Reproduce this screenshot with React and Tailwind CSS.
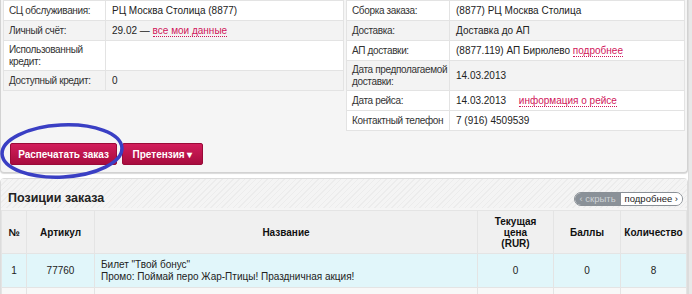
const font = { fontFamily: '"Liberation Sans", Arial, sans-serif' };

function Link({ children }) {
  return (
    <span className="text-[#d0155a] border-b border-dotted border-[#d0155a] leading-[12px]">{children}</span>
  );
}

function InfoTable({ rows, labelW }) {
  return (
    <table className="w-full border-collapse text-[10px] text-[#333] table-fixed">
      <tbody>
        {rows.map((r, i) => (
          <tr key={i} className={r.gray ? "bg-[#f3f3f3]" : "bg-white"} style={{ height: r.h }}>
            <td className={`border border-[#e3e3e3] px-[5px] whitespace-nowrap leading-[12px] tracking-[-0.35px] ${labelW}`}>{r.label}</td>
            <td className="border border-[#e3e3e3] px-[6px] whitespace-nowrap text-[#222] leading-[12px]">{r.value}</td>
          </tr>
        ))}
      </tbody>
    </table>
  );
}

const leftRows = [
  { label: "СЦ обслуживания:", value: "РЦ Москва Столица (8877)", h: 20 },
  { label: "Личный счёт:", value: <>29.02 — <Link>все мои данные</Link></>, h: 20, gray: true },
  { label: <>Использованный<br />кредит:</>, value: "", h: 30 },
  { label: "Доступный кредит:", value: "0", h: 20, gray: true },
];

const rightRows = [
  { label: "Сборка заказа:", value: "(8877) РЦ Москва Столица", h: 20 },
  { label: "Доставка:", value: "Доставка до АП", h: 20, gray: true },
  { label: "АП доставки:", value: <>(8877.119) АП Бирюлево <Link>подробнее</Link></>, h: 20 },
  { label: <>Дата предполагаемой<br />доставки:</>, value: "14.03.2013", h: 30, gray: true },
  { label: "Дата рейса:", value: <>14.03.2013 <span className="ml-[10px]"><Link>информация о рейсе</Link></span></>, h: 20 },
  { label: "Контактный телефон", value: "7 (916) 4509539", h: 20 },
];

export default function App() {
  return (
    <div className="w-[692px] h-[294px] overflow-hidden bg-white relative" style={font}>
      <div className="flex">
        <div className="w-[688px]">
          <div className="bg-[#f5f5f5] border border-[#d2d2d2] border-t-0 rounded-b-[4px] shadow-[0_1px_1px_rgba(0,0,0,0.15)] h-[173px]">
            <div className="flex gap-[2px] px-[2px] items-start">
              <div className="w-[342px]">
                <InfoTable rows={leftRows} labelW="w-[102px]" />
              </div>
              <div className="w-[340px]">
                <InfoTable rows={rightRows} labelW="w-[103px]" />
              </div>
            </div>
            <div className="flex gap-[5px] pl-[9px] pt-[12px]">
              <button className="h-[22px] w-[107px] text-[10px] font-bold text-white rounded-[2px] bg-gradient-to-b from-[#d21d5b] to-[#a80c3e] border border-[#9a0a38]">Распечатать заказ</button>
              <button className="h-[22px] w-[81px] text-[10px] font-bold text-white rounded-[2px] bg-gradient-to-b from-[#d21d5b] to-[#a80c3e] border border-[#9a0a38]">Претензия ▾</button>
            </div>
          </div>
          <div className="mt-[5px] border border-[#dcdcdc] rounded-t-[4px] bg-[#f5f5f5]">
            <div className="h-[29px] flex items-center justify-between pl-[7px] pr-[4px] bg-[repeating-linear-gradient(135deg,#ececec_0px,#ececec_1px,#f4f4f4_1px,#f4f4f4_4px)]">
              <span className="text-[12.5px] font-bold text-[#222] mt-[10px]">Позиции заказа</span>
              <div className="flex mt-[11px] h-[14px] rounded-full overflow-hidden border border-[#8a9096] text-[9.5px] leading-[12px]">
                <span className="bg-[#8a9198] text-[#cfd3d6] pl-[4px] pr-[5px]">‹ скрыть</span>
                <span className="bg-white text-[#222] pl-[4px] pr-[4px]">подробнее ›</span>
              </div>
            </div>
            <table className="w-full border-collapse text-[10px] text-[#222] mt-[2px]">
              <thead>
                <tr className="bg-[#f0f0f0] h-[43px] font-bold text-[#111]">
                  <th className="border border-[#e4e4e4] w-[25px]">№</th>
                  <th className="border border-[#e4e4e4] w-[68px]">Артикул</th>
                  <th className="border border-[#e4e4e4]">Название</th>
                  <th className="border border-[#e4e4e4] w-[76px] leading-[11px]">Текущая<br />цена<br />(RUR)</th>
                  <th className="border border-[#e4e4e4] w-[67px]">Баллы</th>
                  <th className="border border-[#e4e4e4] w-[66px]">Количество</th>
                </tr>
              </thead>
              <tbody>
                <tr className="bg-[#e1f6fa] h-[34px]">
                  <td className="border border-[#e4e4e4] text-center">1</td>
                  <td className="border border-[#e4e4e4] text-center">77760</td>
                  <td className="border border-[#e4e4e4] px-[6px] leading-[12px]">Билет "Твой бонус"<br />Промо: Поймай перо Жар-Птицы! Праздничная акция!</td>
                  <td className="border border-[#e4e4e4] text-center">0</td>
                  <td className="border border-[#e4e4e4] text-center">0</td>
                  <td className="border border-[#e4e4e4] text-center">8</td>
                </tr>
                <tr className="bg-[#f8f8f8] h-[20px]">
                  <td className="border border-[#e4e4e4]"></td>
                  <td className="border border-[#e4e4e4]"></td>
                  <td className="border border-[#e4e4e4]"></td>
                  <td className="border border-[#e4e4e4]"></td>
                  <td className="border border-[#e4e4e4]"></td>
                  <td className="border border-[#e4e4e4]"></td>
                </tr>
              </tbody>
            </table>
          </div>
        </div>
        <div className="w-[4px] bg-[#e8e8e8] border-l border-[#dcdcdc]"></div>
      </div>
      <svg className="absolute left-0 top-[121px]" width="128" height="60" viewBox="0 0 128 60">
        <ellipse cx="62" cy="30" rx="60" ry="26" fill="none" stroke="#3a3fc4" strokeWidth="3.5" transform="rotate(-3 62 30)" />
      </svg>
    </div>
  );
}
